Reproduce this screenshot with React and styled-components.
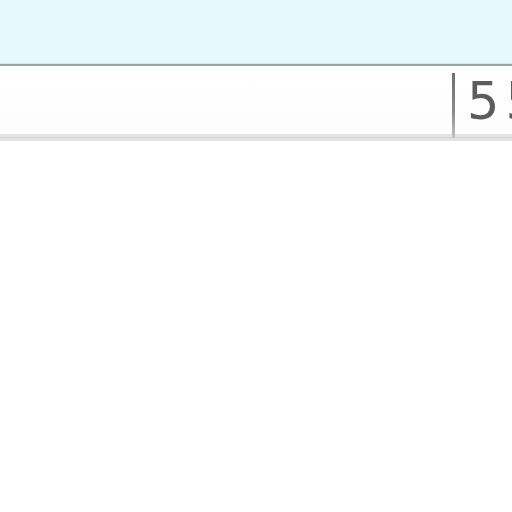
import React from 'react'
import styled, { createGlobalStyle } from 'styled-components'

const GlobalStyle = createGlobalStyle`
  html, body {
    margin: 0;
    padding: 0;
    background: #ffffff;
    overflow: hidden;
    font-family: "DejaVu Sans", Verdana, sans-serif;
  }
`
const Page = styled.div`
  width: 512px;
  height: 512px;
  overflow: hidden;
  background: #ffffff;
`
const Header = styled.div`
  height: 63px;
  background: #e6fafe;
  border-bottom: 1px solid #d3e6e8;
`
const Rule = styled.div`
  height: 2px;
  background: #98a69f;
`
const Toolbar = styled.div`
  display: flex;
  align-items: stretch;
  justify-content: flex-end;
  height: 61px;
  padding-top: 7px;
  background: linear-gradient(#ffffff, #fdfdfd);
  border-bottom: 7px solid #e3e3e3;
  position: relative;
  &::after {
    content: '';
    position: absolute;
    left: 0;
    right: 0;
    bottom: -4px;
    height: 1px;
    background: #d4d4d4;
  }
`
const Divider = styled.div`
  width: 3px;
  margin-right: 12px;
  margin-bottom: -4px;
  position: relative;
  z-index: 1;
  background: linear-gradient(#6f6f6f, #8a8a8a 60%, #c4c4c4);
`
const Value = styled.div`
  width: 45px;
  white-space: nowrap;
  font-family: "DejaVu Sans", Verdana, sans-serif;
  font-size: 51px;
  line-height: 1;
  letter-spacing: 6px;
  color: #5c5c5c;
  padding-top: 3px;
`

export default function App() {
  return (
    <Page>
      <GlobalStyle />
      <Header />
      <Rule />
      <Toolbar>
        <Divider />
        <Value>55</Value>
      </Toolbar>
    </Page>
  )
}
